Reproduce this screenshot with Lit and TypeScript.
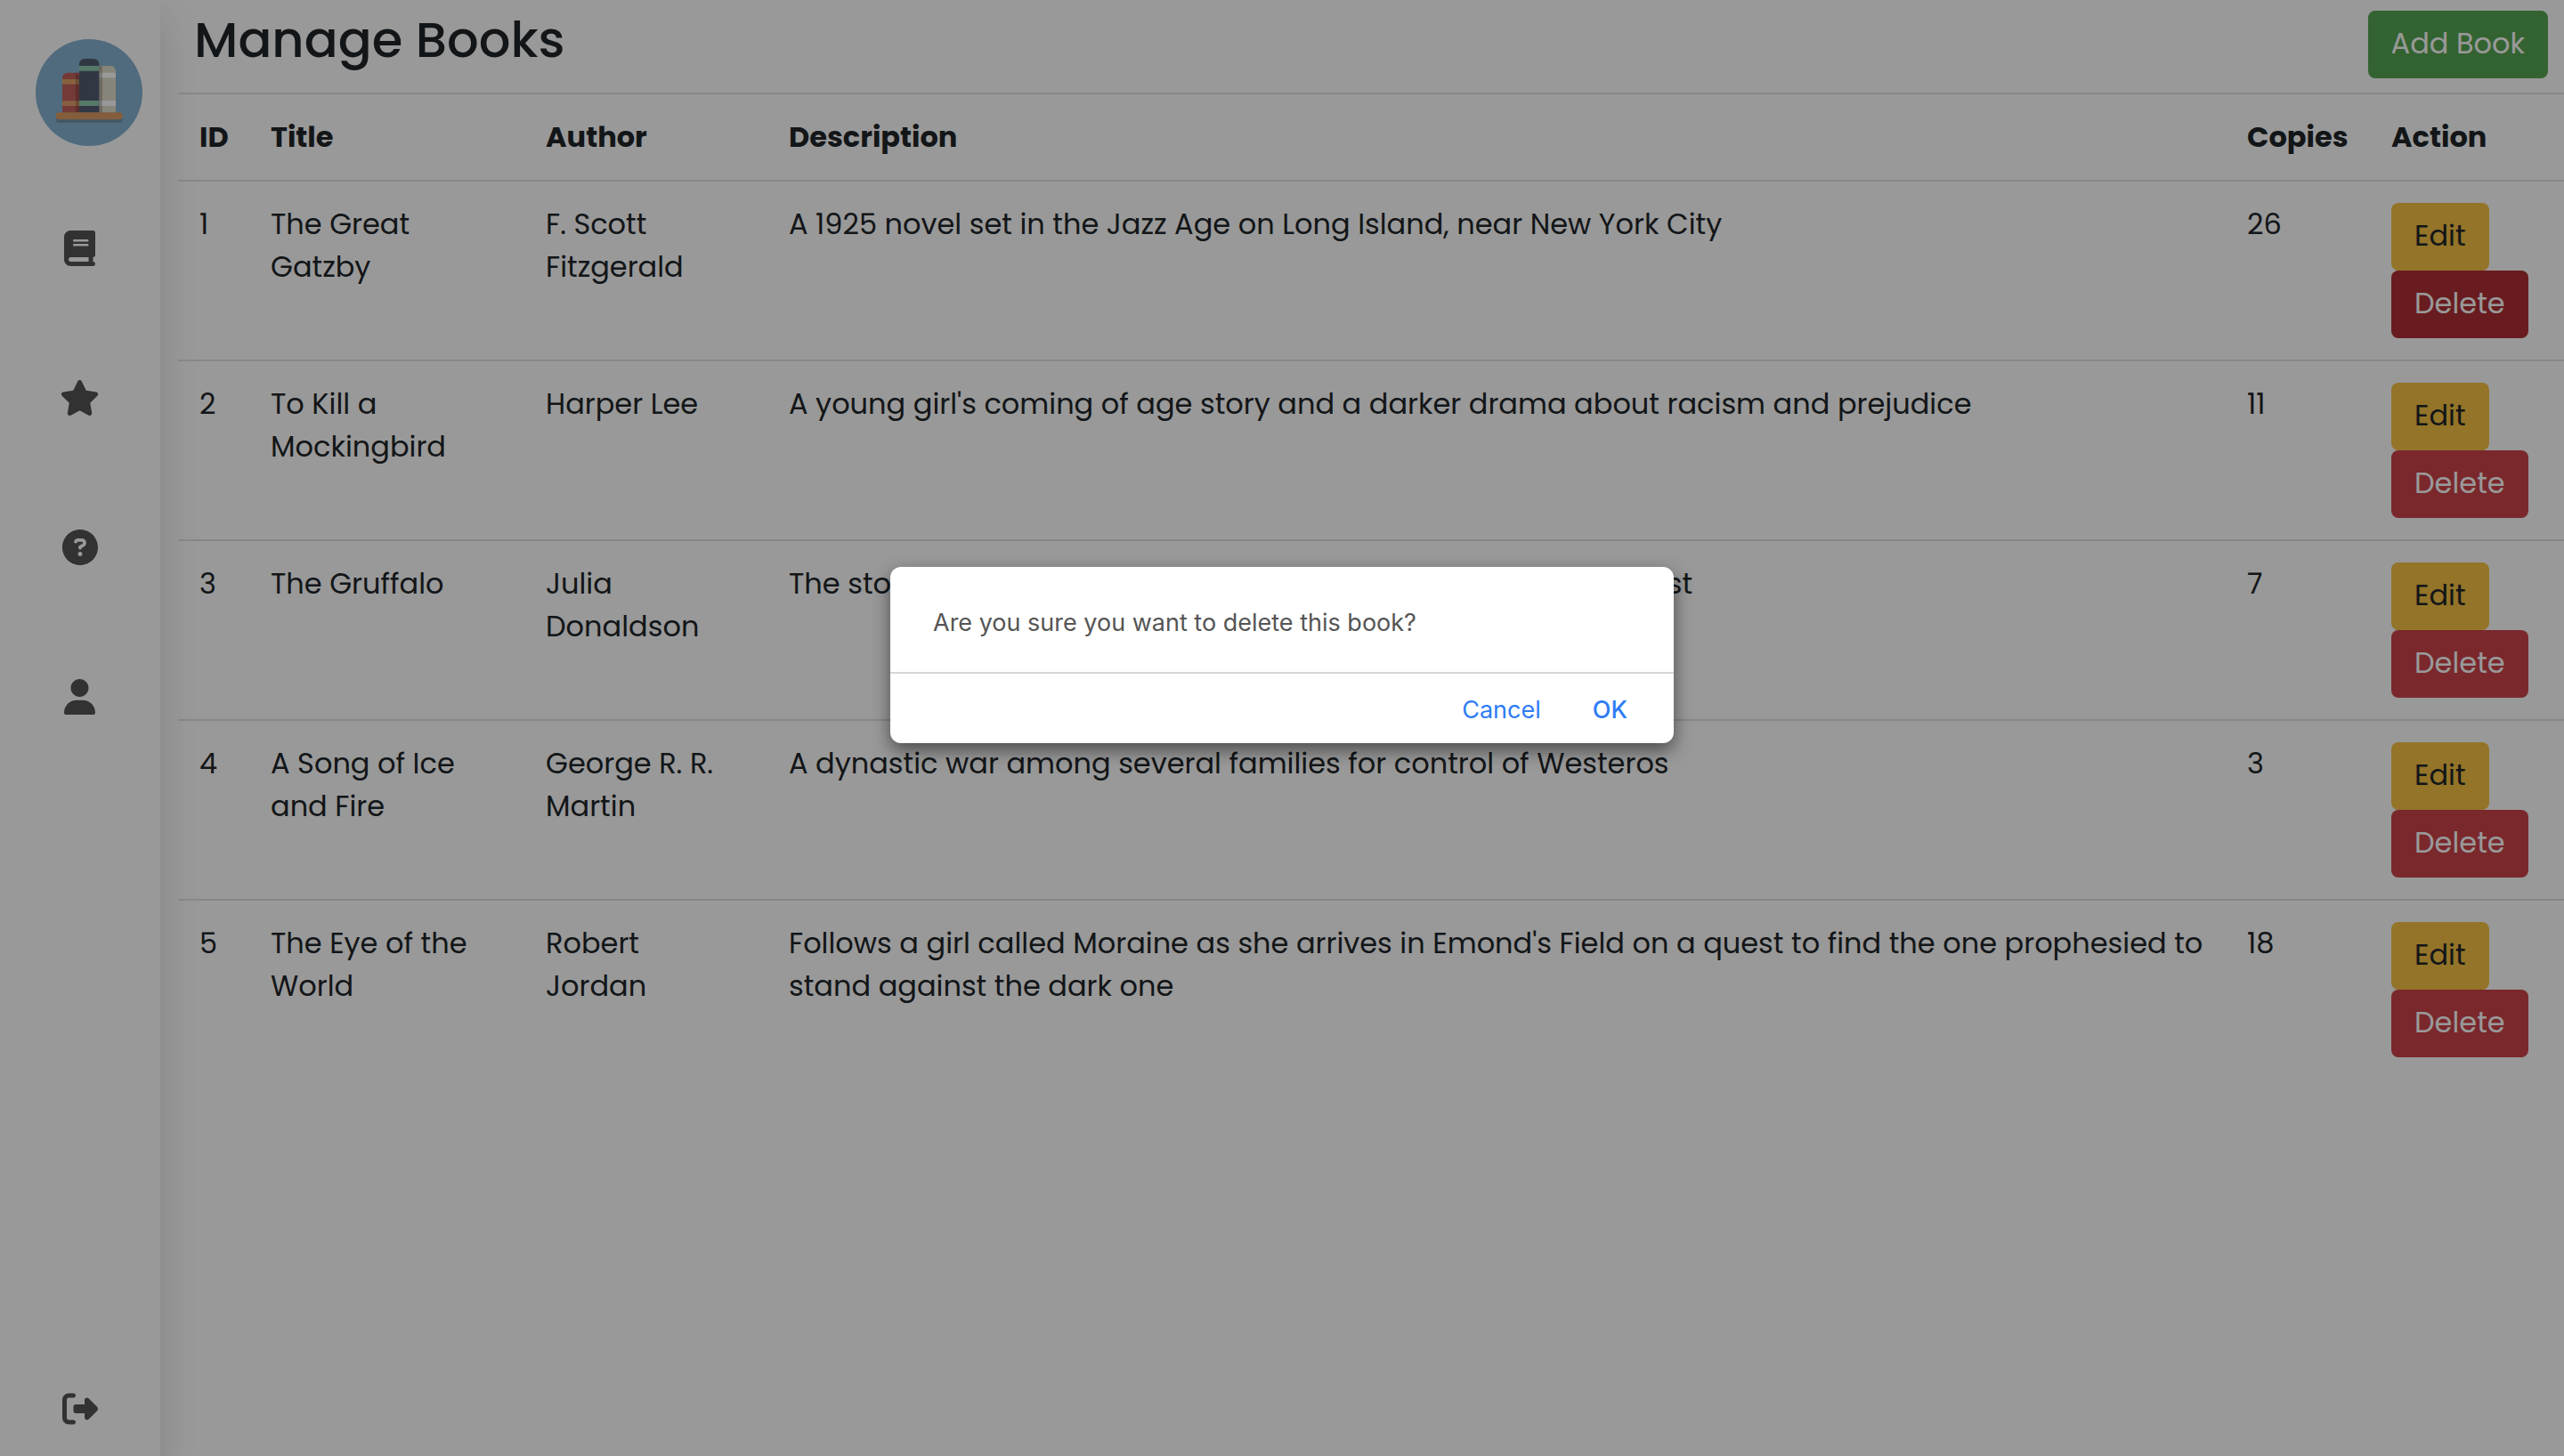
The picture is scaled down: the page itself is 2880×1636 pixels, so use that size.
import { LitElement, html, css, svg } from "lit";
import { customElement, property, state } from "lit/decorators.js";

interface Book {
  id: number;
  title: string;
  author: string;
  description: string;
  copies: number;
}

const BOOKS: Book[] = [
  { id: 1, title: "The Great Gatzby", author: "F. Scott Fitzgerald", description: "A 1925 novel set in the Jazz Age on Long Island, near New York City", copies: 26 },
  { id: 2, title: "To Kill a Mockingbird", author: "Harper Lee", description: "A young girl's coming of age story and a darker drama about racism and prejudice", copies: 11 },
  { id: 3, title: "The Gruffalo", author: "Julia Donaldson", description: "The story of a mouse and her walk through the deep dark forest", copies: 7 },
  { id: 4, title: "A Song of Ice and Fire", author: "George R. R. Martin", description: "A dynastic war among several families for control of Westeros", copies: 3 },
  { id: 5, title: "The Eye of the World", author: "Robert Jordan", description: "Follows a girl called Moraine as she arrives in Emond's Field on a quest to find the one prophesied to stand against the dark one", copies: 18 },
];

interface Icon {
  width: number;
  path: string;
}

const ICONS: Record<string, Icon> = {
  book: {
    width: 448,
    path: "M96 0C43 0 0 43 0 96V416c0 53 43 96 96 96H384h32c17.7 0 32-14.3 32-32s-14.3-32-32-32V384c17.7 0 32-14.3 32-32V32c0-17.7-14.3-32-32-32H384 96zm0 384H352v64H96c-17.7 0-32-14.3-32-32s14.3-32 32-32zm32-240c0-8.8 7.2-16 16-16H336c8.8 0 16 7.2 16 16s-7.2 16-16 16H144c-8.8 0-16-7.2-16-16zm16 48H336c8.8 0 16 7.2 16 16s-7.2 16-16 16H144c-8.8 0-16-7.2-16-16s7.2-16 16-16z",
  },
  star: {
    width: 576,
    path: "M316.9 18C311.6 7 300.4 0 288.1 0s-23.4 7-28.8 18L195 150.3 51.4 171.5c-12 1.8-22 10.2-25.7 21.7s-.7 24.2 7.9 32.7L137.8 329 113.2 474.7c-2 12 3 24.2 12.9 31.3s23 8 33.8 2.3l128.3-68.5 128.3 68.5c10.8 5.7 23.9 4.9 33.8-2.3s14.9-19.3 12.9-31.3L438.5 329 542.7 225.9c8.6-8.5 11.7-21.2 7.9-32.7s-13.7-19.9-25.7-21.7L381.2 150.3 316.9 18z",
  },
  question: {
    width: 512,
    path: "M256 512c141.4 0 256-114.6 256-256S397.4 0 256 0S0 114.6 0 256S114.6 512 256 512zM169.8 165.3c7.9-22.3 29.1-37.3 52.8-37.3h58.3c34.9 0 63.1 28.3 63.1 63.1c0 22.6-12.1 43.5-31.7 54.8L280 264.4c-.2 13-10.9 23.6-24 23.6c-13.3 0-24-10.7-24-24V250.5c0-8.6 4.6-16.5 12.1-20.8l44.3-25.4c4.7-2.7 7.6-7.7 7.6-13.1c0-8.4-6.8-15.1-15.1-15.1H222.6c-3.4 0-6.4 2.1-7.5 5.3l-.4 1.2c-4.4 12.5-18.2 19-30.6 14.6s-19-18.2-14.6-30.6l.4-1.2zM288 352c0 17.7-14.3 32-32 32s-32-14.3-32-32s14.3-32 32-32s32 14.3 32 32z",
  },
  user: {
    width: 448,
    path: "M224 256c70.7 0 128-57.3 128-128S294.7 0 224 0S96 57.3 96 128s57.3 128 128 128zm-45.7 48C79.8 304 0 383.8 0 482.3C0 498.7 13.3 512 29.7 512H418.3c16.4 0 29.7-13.3 29.7-29.7C448 383.8 368.2 304 269.7 304H178.3z",
  },
  signOut: {
    width: 512,
    path: "M377.9 105.9L500.7 228.7c7.2 7.2 11.3 17.1 11.3 27.3s-4.1 20.1-11.3 27.3L377.9 406.1c-6.4 6.4-15 9.9-24 9.9c-18.7 0-33.9-15.2-33.9-33.9l0-62.1-128 0c-17.7 0-32-14.3-32-32l0-64c0-17.7 14.3-32 32-32l128 0 0-62.1c0-18.7 15.2-33.9 33.9-33.9c9 0 17.6 3.6 24 9.9zM160 96L96 96c-17.7 0-32 14.3-32 32l0 256c0 17.7 14.3 32 32 32l64 0c17.7 0 32 14.3 32 32s-14.3 32-32 32l-64 0c-53 0-96-43-96-96L0 128C0 75 43 32 96 32l64 0c17.7 0 32 14.3 32 32s-14.3 32-32 32z",
  },
};

const ICON_SIZE = 40;

@customElement("side-bar")
export class SideBar extends LitElement {
  static styles = css`
    :host {
      display: flex;
      flex-direction: column;
      align-items: flex-start;
      box-sizing: border-box;
      width: 180px;
      padding: 44px 0 33px;
      background: #fff;
      box-shadow: 0 20px 40px rgba(0, 0, 0, 0.15);
    }
    .logo {
      display: block;
      width: 120px;
      height: 120px;
      margin-left: 40px;
    }
    .logo svg {
      display: block;
      width: 100%;
      height: 100%;
    }
    .nav {
      display: flex;
      flex-direction: column;
      flex: 1;
      gap: 128px;
      width: 100%;
      padding-top: 95px;
    }
    .link {
      display: flex;
      justify-content: center;
      color: #545454;
    }
    .last {
      margin-top: auto;
    }
    .icon {
      display: block;
      fill: currentColor;
    }
  `;

  private link(name: string, label: string, last = false) {
    const icon = ICONS[name];
    // An even box width keeps the centred icon on whole pixels.
    const width = 2 * Math.ceil((icon.width / 512) * (ICON_SIZE / 2));
    return html`<a class="link ${last ? "last" : ""}" href="#${name}" aria-label=${label}>
      <svg
        class="icon"
        width=${width}
        height=${ICON_SIZE}
        viewBox="0 0 ${icon.width} 512"
        preserveAspectRatio="xMinYMid meet"
        aria-hidden="true"
      >${svg`<path d=${icon.path} />`}</svg>
    </a>`;
  }

  render() {
    return html`
      <a class="logo" href="#home" aria-label="Home">
        <svg viewBox="0 0 360 360" aria-hidden="true">
          <circle cx="180" cy="180" r="180" fill="#85b2d0" />
          <rect x="68" y="256" width="225" height="25" rx="12" fill="#6f91a9" />
          <path d="M90 248V133q0-20 20-20h37v135z" fill="#c1625d" />
          <path d="M90 135h57v17H90zM90 208h57v17H90z" fill="#dfa06a" />
          <path d="M135 113h2q10 4 10 20v115h-12z" fill="#000" fill-opacity=".2" />
          <path d="M213 248V90h37q20 0 20 20v138z" fill="#e1decb" />
          <path d="M213 113h57v17h-57zM213 207h57v18h-57z" fill="#fff" />
          <path d="M213 90h12v158h-12z" fill="#000" fill-opacity=".2" />
          <path d="M147 248V86q0-20 20-20h27q20 0 20 20v162z" fill="#535c70" />
          <path d="M147 90h67v17h-67zM147 207h67v18h-67z" fill="#8fcab1" />
          <rect x="68" y="247" width="225" height="24" rx="12" fill="#dc9c66" />
        </svg>
      </a>
      <nav class="nav">
        ${this.link("book", "Books")} ${this.link("star", "Reviews")} ${this.link("question", "Help")}
        ${this.link("user", "Account")} ${this.link("signOut", "Sign out", true)}
      </nav>
    `;
  }
}

@customElement("confirm-dialog")
export class ConfirmDialog extends LitElement {
  @property() message = "";

  static styles = css`
    :host {
      position: absolute;
      inset: 0;
      display: flex;
      justify-content: center;
      align-items: flex-start;
      padding-top: 637px;
      background: rgba(0, 0, 0, 0.4);
      font-family: Inter, "Liberation Sans", sans-serif;
      font-size: 27px;
      line-height: 36px;
    }
    .dialog {
      box-sizing: border-box;
      width: 880px;
      border-radius: 12px;
      background: #fff;
      box-shadow: 0 8px 20px rgba(0, 0, 0, 0.5);
    }
    .message {
      margin: 0;
      padding: 45px 48px 37px;
      color: #555;
    }
    .actions {
      display: flex;
      justify-content: flex-end;
      gap: 18px;
      padding: 23px 32px 19px;
      border-top: 2px solid #d6d6d6;
    }
    .action {
      padding: 0 20px;
      border: 0;
      background: none;
      color: #2e7cf6;
      font: inherit;
      cursor: pointer;
    }
    .primary {
      font-weight: 500;
    }
  `;

  private close(confirmed: boolean) {
    this.dispatchEvent(new CustomEvent("close", { detail: confirmed }));
  }

  render() {
    return html`
      <div class="dialog" role="alertdialog" aria-modal="true" aria-describedby="message">
        <p class="message" id="message">${this.message}</p>
        <div class="actions">
          <button class="action" type="button" @click=${() => this.close(false)}>Cancel</button>
          <button class="action primary" type="button" @click=${() => this.close(true)}>OK</button>
        </div>
      </div>
    `;
  }
}

@customElement("app-root")
export class AppRoot extends LitElement {
  @state() private books = BOOKS;
  @state() private pending: number | null = 1;

  static styles = css`
    :host {
      position: relative;
      display: flex;
      min-height: 100vh;
      background: #fff;
      color: #212529;
      font-family: Poppins, Inter, "Liberation Sans", sans-serif;
      font-size: 32px;
      line-height: 48px;
    }
    .main {
      position: relative;
      flex: 1;
      min-width: 0;
      padding-left: 20px;
    }
    .header {
      display: flex;
      justify-content: space-between;
      align-items: flex-start;
      padding: 12px 18px 16px;
    }
    .heading {
      margin: 0;
      font-size: 56px;
      font-weight: 500;
      line-height: 66px;
    }
    .table {
      width: 100%;
      border-collapse: collapse;
      table-layout: fixed;
    }
    .cell {
      box-sizing: border-box;
      padding: 24px;
      border-top: 2px solid #dee2e6;
      text-align: left;
      vertical-align: top;
    }
    .head {
      font-weight: 700;
    }
    .id { width: 80px; }
    .title { width: 309px; }
    .author { width: 273px; }
    .copies { width: 162px; }
    .action { width: 218px; }
    .buttons {
      display: flex;
      flex-direction: column;
      align-items: flex-start;
    }
    .btn {
      box-sizing: border-box;
      height: 76px;
      padding: 0 26px 2px;
      border: 0;
      border-radius: 8px;
      font: inherit;
      cursor: pointer;
    }
    .add {
      background: #55a552;
      color: #fff;
    }
    .edit {
      background: #f5c244;
      color: #212529;
    }
    .delete {
      background: #cb444a;
      color: #fff;
    }
    .delete.active {
      background: #ad3035;
    }
  `;

  private onClose(event: CustomEvent<boolean>) {
    if (event.detail) this.books = this.books.filter((book) => book.id !== this.pending);
    this.pending = null;
  }

  private row(book: Book) {
    return html`
      <tr>
        <td class="cell">${book.id}</td>
        <td class="cell">${book.title}</td>
        <td class="cell">${book.author}</td>
        <td class="cell">${book.description}</td>
        <td class="cell">${book.copies}</td>
        <td class="cell">
          <div class="buttons">
            <button class="btn edit" type="button">Edit</button>
            <button
              class="btn delete ${this.pending === book.id ? "active" : ""}"
              type="button"
              @click=${() => (this.pending = book.id)}
            >Delete</button>
          </div>
        </td>
      </tr>
    `;
  }

  render() {
    return html`
      <side-bar></side-bar>
      <main class="main">
        <header class="header">
          <h1 class="heading">Manage Books</h1>
          <button class="btn add" type="button">Add Book</button>
        </header>
        <table class="table">
          <thead>
            <tr>
              <th class="cell head id" scope="col">ID</th>
              <th class="cell head title" scope="col">Title</th>
              <th class="cell head author" scope="col">Author</th>
              <th class="cell head" scope="col">Description</th>
              <th class="cell head copies" scope="col">Copies</th>
              <th class="cell head action" scope="col">Action</th>
            </tr>
          </thead>
          <tbody>
            ${this.books.map((book) => this.row(book))}
          </tbody>
        </table>
      </main>
      ${this.pending === null
        ? null
        : html`<confirm-dialog
            message="Are you sure you want to delete this book?"
            @close=${this.onClose}
          ></confirm-dialog>`}
    `;
  }
}
